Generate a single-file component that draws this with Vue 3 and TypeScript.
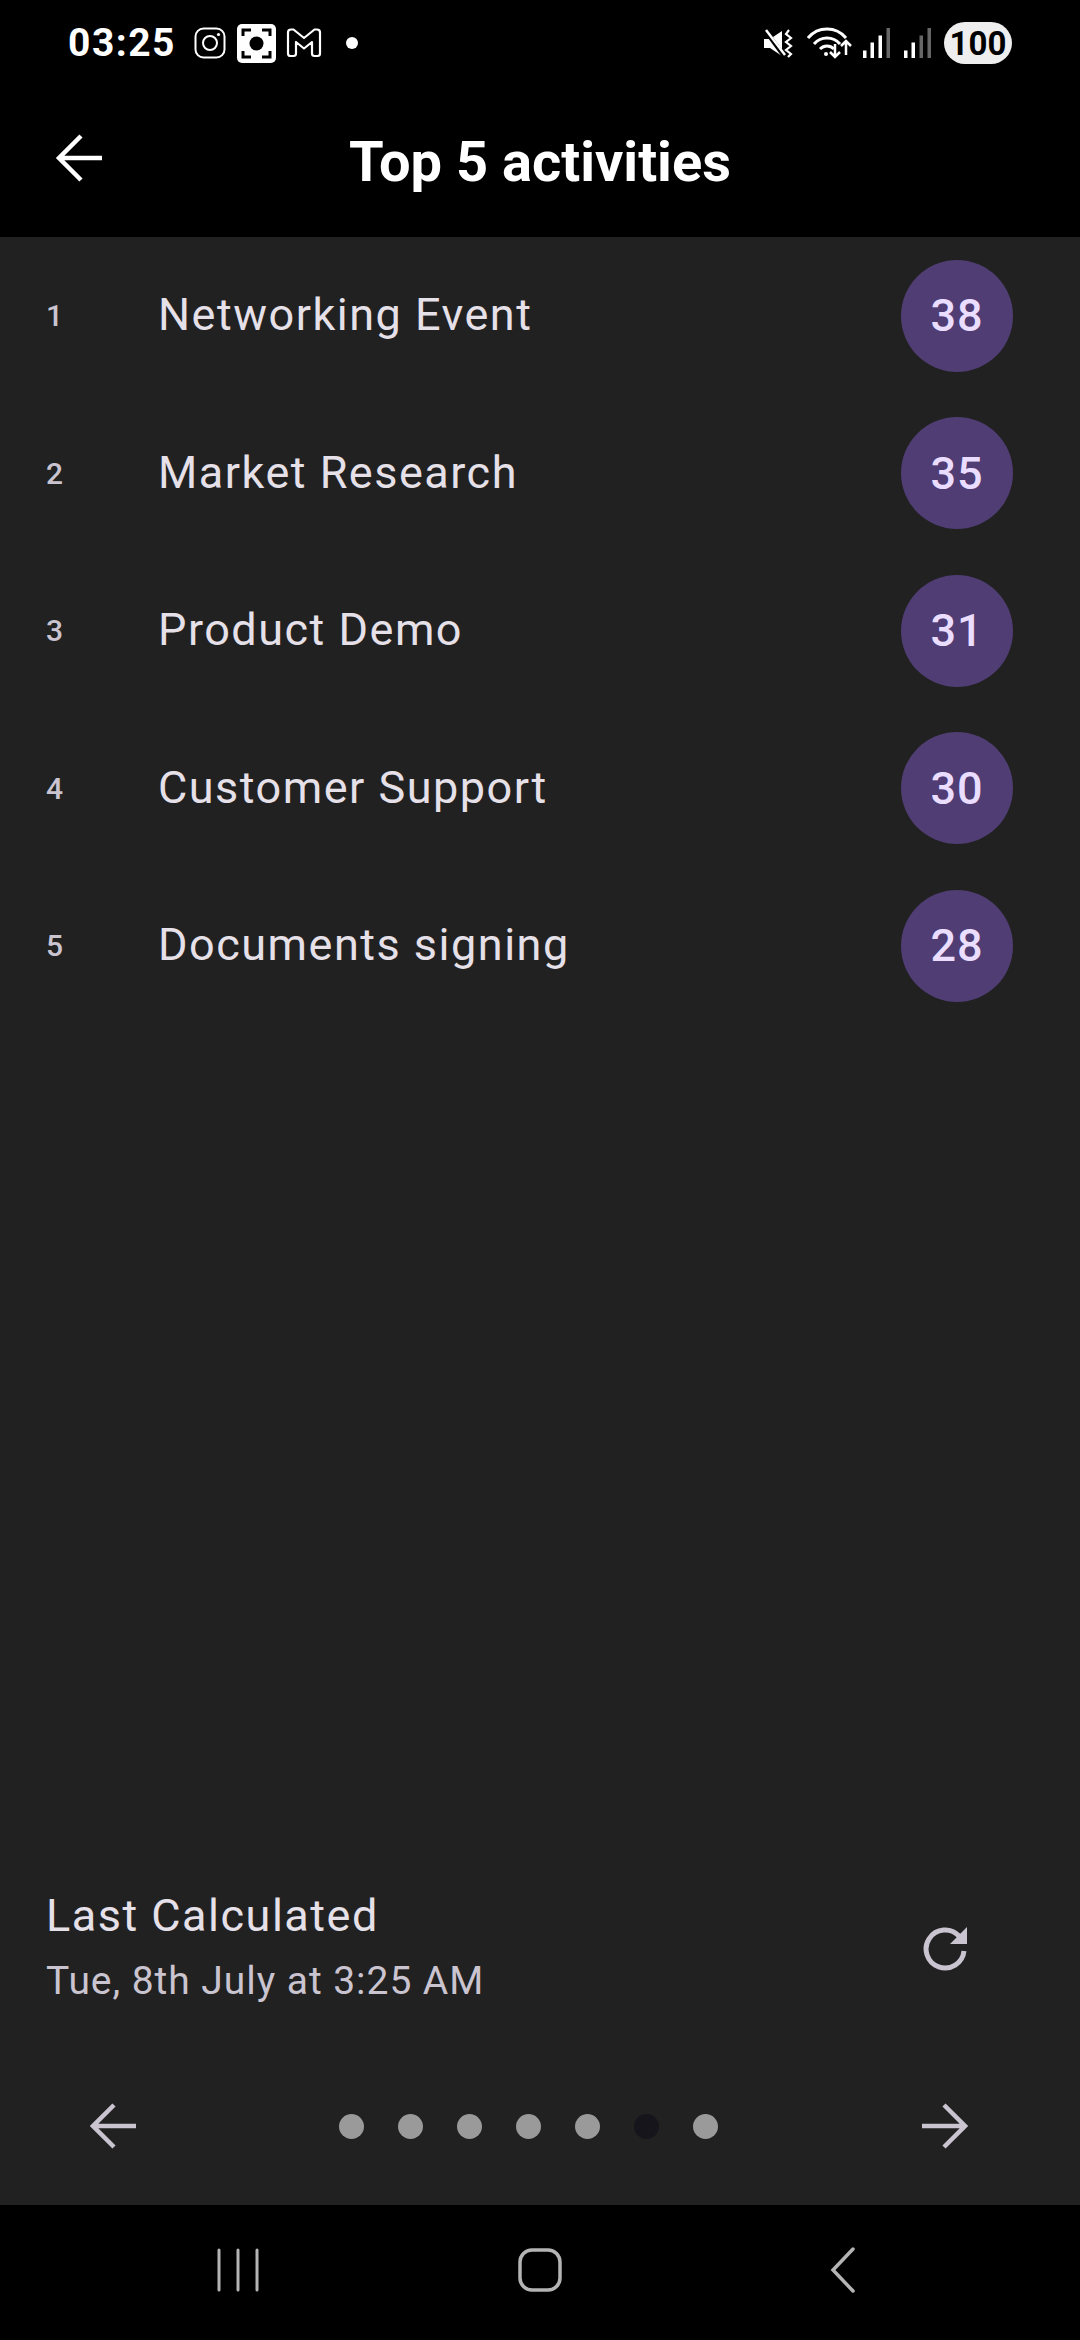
<script setup lang="ts">
const activities = [
  { name: 'Networking Event', count: 38 },
  { name: 'Market Research', count: 35 },
  { name: 'Product Demo', count: 31 },
  { name: 'Customer Support', count: 30 },
  { name: 'Documents signing', count: 28 },
]

const dots = [0, 1, 2, 3, 4, 5, 6]
const activeDot = 5
</script>

<template>
  <div class="screen">
    <header class="top">
      <div class="status">
        <span class="time">03:25</span>
        <svg width="32" height="32" viewBox="0 0 32 32" fill="none" stroke="#fff" stroke-width="2">
          <rect x="1.5" y="1.5" width="29" height="29" rx="8" />
          <circle cx="16" cy="16" r="7" />
          <circle cx="24.5" cy="7.5" r="1.6" fill="#fff" stroke="none" />
        </svg>
        <svg class="ic-focus" width="39" height="39" viewBox="0 0 39 39">
          <rect width="39" height="39" rx="5" fill="#fff" />
          <circle cx="19.500" cy="19.500" r="7" fill="#000" />
          <path d="M6 12V6h8M25 6h8v6M6 27v6h8M25 33h8v-6" fill="none" stroke="#000" stroke-width="3" />
        </svg>
        <svg class="ic-mail" width="36" height="30" viewBox="0 0 36 30" fill="none" stroke="#fff" stroke-width="2.200" stroke-linejoin="round">
          <path d="M2 4.500Q2 1.500 5 1.500H7.500L18 10 28.500 1.500H31Q34 1.500 34 4.500V25.500Q34 28 31.500 28H28.500Q26 28 26 25.500V14L18 20.500 10 14V25.500Q10 28 7.500 28H4.500Q2 28 2 25.500Z" />
        </svg>
        <span class="note-dot"></span>
        <span class="spacer"></span>
        <svg width="29" height="29" viewBox="0 0 29 29">
          <path d="M0 10H6L18 2V27L6 19H0Z" fill="#fff" />
          <path d="M1 1L20 27" stroke="#000" stroke-width="4.500" />
          <path d="M2 1L21 26" stroke="#fff" stroke-width="2.500" />
          <path d="M25 1L22 5 27 9 22 13 27 17 22 21 27 25 24 28" fill="none" stroke="#fff" stroke-width="2.200" />
        </svg>
        <svg class="ic-wifi" width="48" height="32" viewBox="0 0 48 32" fill="none" stroke="#fff" stroke-width="3">
          <path d="M1 11C11 -1 29 -1 39 11" />
          <path d="M7 17C14 9 26 9 33 17" />
          <path d="M13 22C17 18 23 18 27 22" />
          <circle cx="19" cy="27" r="2" fill="#fff" stroke="none" />
          <path d="M28 17V30M23 25L28 30 33 25" stroke-width="2.500" />
          <path d="M39 28V14M34 19L39 14 44 19" stroke-width="2.500" />
        </svg>
        <svg class="ic-signal" width="28" height="30" viewBox="0 0 28 30">
          <rect x="0" y="22.500" width="3.500" height="7.500" fill="#fff" />
          <rect x="7.500" y="14.500" width="3.500" height="15.500" fill="#fff" />
          <rect x="15.500" y="7.500" width="3.500" height="22.500" fill="#fff" />
          <rect x="23.500" y="0" width="3.500" height="30" fill="#666" />
        </svg>
        <svg class="ic-signal2" width="28" height="30" viewBox="0 0 28 30">
          <rect x="0" y="22.500" width="3.500" height="7.500" fill="#fff" />
          <rect x="7.500" y="14.500" width="3.500" height="15.500" fill="#fff" />
          <rect x="15.500" y="7.500" width="3.500" height="22.500" fill="#666" />
          <rect x="23.500" y="0" width="3.500" height="30" fill="#666" />
        </svg>
        <span class="battery">100</span>
      </div>
      <div class="appbar">
        <svg class="back" width="48" height="48" viewBox="0 0 48 48" fill="none" stroke="#fff" stroke-width="4.500">
          <path d="M48 24H5M27 2L5 24 27 46" />
        </svg>
        <h1>Top 5 activities</h1>
      </div>
    </header>

    <main class="body">
      <ul class="list">
        <li v-for="(a, i) in activities" :key="a.name" class="row">
          <span class="rank">{{ i + 1 }}</span>
          <span class="name">{{ a.name }}</span>
          <span class="count">{{ a.count }}</span>
        </li>
      </ul>

      <section class="calc">
        <div>
          <div class="calc-title">Last Calculated</div>
          <div class="calc-date">Tue, 8th July at 3:25 AM</div>
        </div>
        <svg width="46" height="46" viewBox="0 0 46 46" fill="none">
          <path d="M37 11A19 19 0 1 0 42 26" stroke="#cac4d0" stroke-width="5" />
          <path d="M45 2V19H28Z" fill="#cac4d0" />
        </svg>
      </section>

      <nav class="pager">
        <svg width="46" height="46" viewBox="0 0 46 46" fill="none" stroke="#cac4d0" stroke-width="4.500">
          <path d="M46 23H3M24 2L3 23 24 44" />
        </svg>
        <div class="dots">
          <span v-for="d in dots" :key="d" class="dot" :class="{ active: d === activeDot }"></span>
        </div>
        <svg width="46" height="46" viewBox="0 0 46 46" fill="none" stroke="#cac4d0" stroke-width="4.500">
          <path d="M0 23H43M22 2L43 23 22 44" />
        </svg>
      </nav>
    </main>

    <footer class="navbar">
      <svg width="42" height="44" viewBox="0 0 42 44" fill="none" stroke="#b4b4b4" stroke-width="3" stroke-linecap="round">
        <path d="M2 2V42M21 2V42M40 2V42" />
      </svg>
      <svg class="nav-home" width="44" height="44" viewBox="0 0 44 44" fill="none" stroke="#b4b4b4" stroke-width="3.500">
        <rect x="2" y="2" width="40" height="40" rx="12" />
      </svg>
      <svg class="nav-back" width="26" height="46" viewBox="0 0 26 46" fill="none" stroke="#b4b4b4" stroke-width="3.500" stroke-linecap="round">
        <path d="M23 2L3 23 23 44" />
      </svg>
    </footer>
  </div>
</template>

<style>
html, body {
  margin: 0;
  background: #000;
}
</style>

<style scoped>
.screen {
  width: 1080px;
  height: 2340px;
  display: flex;
  flex-direction: column;
  background: #212121;
  font-family: Roboto, "Liberation Sans", sans-serif;
  overflow: hidden;
}

.top {
  height: 237px;
  background: #000;
  flex: none;
}

.status {
  height: 86px;
  display: flex;
  align-items: center;
  padding: 0 68px;
  color: #fff;
}

.time {
  font-size: 39px;
  font-weight: 700;
  letter-spacing: 1.500px;
  width: 126px;
}

.ic-focus { margin-left: 11px; }
.ic-mail { margin-left: 10px; }

.note-dot {
  width: 12px;
  height: 12px;
  border-radius: 50%;
  background: #fff;
  margin-left: 24px;
}

.spacer { flex: 1; }

.ic-wifi { margin-left: 14px; }
.ic-signal { margin-left: 8px; }
.ic-signal2 { margin-left: 13px; }

.battery {
  width: 68px;
  height: 42px;
  margin-left: 12px;
  border-radius: 21px;
  background: #eee;
  color: #000;
  font-size: 33px;
  font-weight: 700;
  display: flex;
  align-items: center;
  justify-content: center;
}

.appbar {
  height: 151px;
  position: relative;
  display: flex;
  align-items: center;
  justify-content: center;
}

.back {
  position: absolute;
  left: 54px;
  top: 48px;
}

.appbar h1 {
  margin: 0;
  color: #fff;
  font-size: 56px;
  font-weight: 700;
}

.body {
  flex: 1;
  display: flex;
  flex-direction: column;
}

.list {
  list-style: none;
  margin: 0;
  padding: 0;
  flex: 1;
}

.row {
  height: 157.500px;
  display: flex;
  align-items: center;
  padding: 0 67px 0 46px;
}

.rank {
  width: 113px;
  font-size: 30px;
  font-weight: 500;
  color: #cac4d0;
}

.name {
  flex: 1;
  margin-left: -1px;
  padding-bottom: 2px;
  font-size: 45px;
  letter-spacing: 1.500px;
  color: #e6e0e9;
}

.count {
  width: 112px;
  height: 112px;
  border-radius: 50%;
  background: #4f3d73;
  color: #eaddff;
  font-size: 45px;
  font-weight: 500;
  letter-spacing: 1px;
  display: flex;
  align-items: center;
  justify-content: center;
}

.calc {
  height: 204px;
  box-sizing: border-box;
  display: flex;
  align-items: center;
  justify-content: space-between;
  padding: 0 112px 2px 46px;
}

.calc-title {
  font-size: 45px;
  letter-spacing: 1.500px;
  color: #e6e0e9;
  line-height: 56px;
}

.calc-date {
  font-size: 39px;
  letter-spacing: 0.950px;
  color: #cac4d0;
  line-height: 56px;
  margin-top: 9px;
}

.pager {
  height: 154px;
  box-sizing: border-box;
  display: flex;
  align-items: center;
  justify-content: space-between;
  padding: 0 112px 4px 90px;
}

.dots {
  display: flex;
  gap: 34px;
  margin-right: 2px;
}

.dot {
  width: 25px;
  height: 25px;
  border-radius: 50%;
  background: #9a9a9a;
}

.dot.active { background: #15151b; }

.navbar {
  height: 135px;
  flex: none;
  background: #000;
  display: flex;
  align-items: center;
  padding: 0 0 5px 217px;
  box-sizing: border-box;
}

.nav-home { margin-left: 259px; }
.nav-back { margin-left: 268px; }
</style>
